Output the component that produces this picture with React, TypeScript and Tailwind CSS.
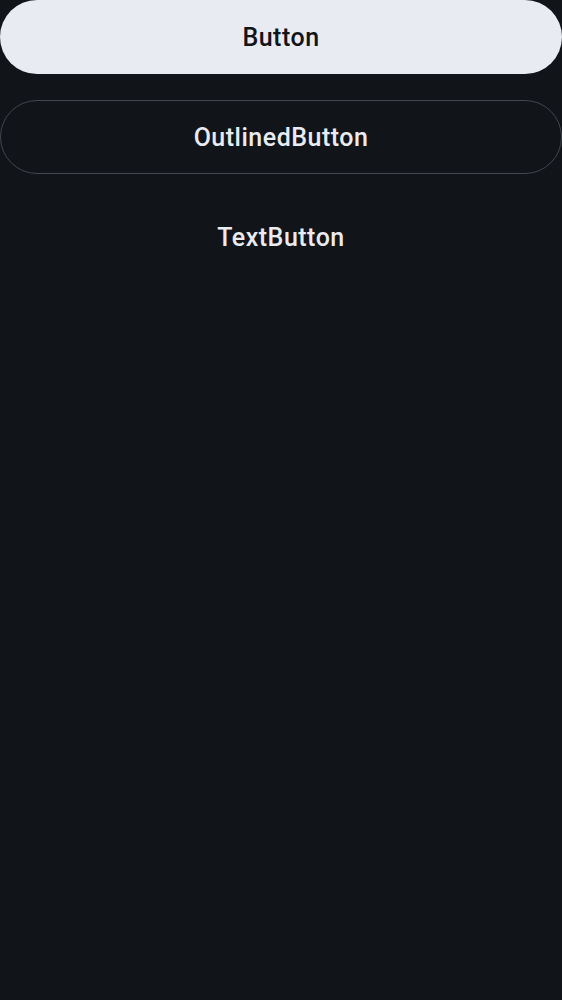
export default function App() {
  return (
    <div
      className="min-h-screen bg-[#111418] flex flex-col gap-[26px]"
      style={{ fontFamily: 'Roboto, "Noto Sans", sans-serif' }}
    >
      <button className="h-[74px] w-full pt-[2px] rounded-full bg-[#e8ebf1] text-[#111418] text-[25px] font-medium tracking-[0.5px]">
        Button
      </button>
      <button className="h-[74px] w-full pt-[2px] rounded-full border border-[#42464d] text-[#e8ebf1] text-[25px] font-medium tracking-[0.5px]">
        OutlinedButton
      </button>
      <button className="h-[74px] w-full pt-[2px] rounded-full text-[#e8ebf1] text-[25px] font-medium tracking-[0.5px]">
        TextButton
      </button>
    </div>
  );
}
